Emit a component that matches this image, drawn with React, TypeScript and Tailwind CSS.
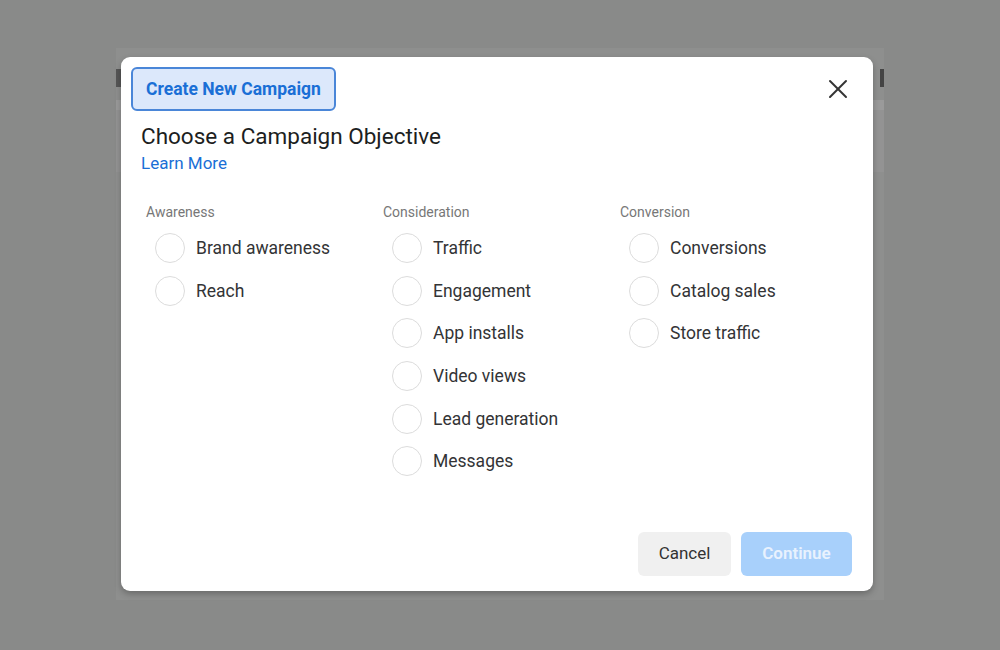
import React from "react";
import { X } from "lucide-react";

const columns = [
  { title: "Awareness", items: ["Brand awareness", "Reach"] },
  {
    title: "Consideration",
    items: ["Traffic", "Engagement", "App installs", "Video views", "Lead generation", "Messages"],
  },
  { title: "Conversion", items: ["Conversions", "Catalog sales", "Store traffic"] },
];

function Radio({ label }: { label: string }) {
  return (
    <label className="flex items-center h-[42.6px] pl-[9px] cursor-pointer">
      <span className="w-[30px] h-[30px] rounded-full border-[1.5px] border-[#dcdcdc] bg-white shrink-0" />
      <span className="ml-[11px] text-[17.5px] text-[#333436]">{label}</span>
    </label>
  );
}

export default function App() {
  return (
    <div
      className="relative w-[1000px] h-[650px] bg-[#898a89] overflow-hidden"
      style={{ fontFamily: "Roboto, 'Noto Sans', sans-serif" }}
    >
      {/* dimmed page behind the dialog */}
      <div className="ml-[116px] mt-[48px] w-[768px] h-[552px] bg-[#8e8f8e] flex flex-col">
        <div className="flex justify-between mt-[21px] h-[18px]">
          <div className="w-[5px] bg-[#555]" />
          <div className="w-[4px] bg-[#444]" />
        </div>
        <div className="mt-[13px] h-[10px] bg-[#9a9a9a]" />
        <div className="h-[62px] bg-[#939393]" />
      </div>

      {/* dialog */}
      <div className="absolute left-[121px] top-[57px] w-[752px] h-[534px] bg-white rounded-[9px] shadow-[0_3px_6px_rgba(0,0,0,0.25)] flex flex-col">
        <div className="flex items-start justify-between pl-[10px] pt-[10px] pr-[19px]">
          <div className="h-[44px] w-[205px] rounded-[6px] border-2 border-[#4a86d8] bg-[#dce8fb] flex items-center pl-[13px] text-[17.5px] font-bold text-[#1a6fd6]">
            Create New Campaign
          </div>
          <button className="mt-[6px] text-[#333]">
            <X size={32} strokeWidth={1.5} />
          </button>
        </div>

        <div className="pl-[20px] mt-[10px]">
          <h1 className="text-[22.5px] leading-[31px] text-[#1c1e21]">Choose a Campaign Objective</h1>
          <a className="block text-[17px] leading-[22px] text-[#1a6fd6]">Learn More</a>
        </div>

        <div className="grid grid-cols-[237px_237px_237px] pl-[25px] mt-[29px]">
          {columns.map((col) => (
            <div key={col.title}>
              <div className="text-[14px] leading-[18px] text-[#777]">{col.title}</div>
              <div className="mt-[6px]">
                {col.items.map((item) => (
                  <Radio key={item} label={item} />
                ))}
              </div>
            </div>
          ))}
        </div>

        <div className="mt-auto flex justify-end gap-[10px] pr-[21px] pb-[15px]">
          <button className="h-[44px] w-[93px] rounded-[6px] bg-[#f0f0f0] text-[17px] text-[#333]">
            Cancel
          </button>
          <button className="h-[44px] w-[111px] rounded-[6px] bg-[#a8d0fb] text-[17px] font-semibold text-[#e8f2fe]">
            Continue
          </button>
        </div>
      </div>
    </div>
  );
}
